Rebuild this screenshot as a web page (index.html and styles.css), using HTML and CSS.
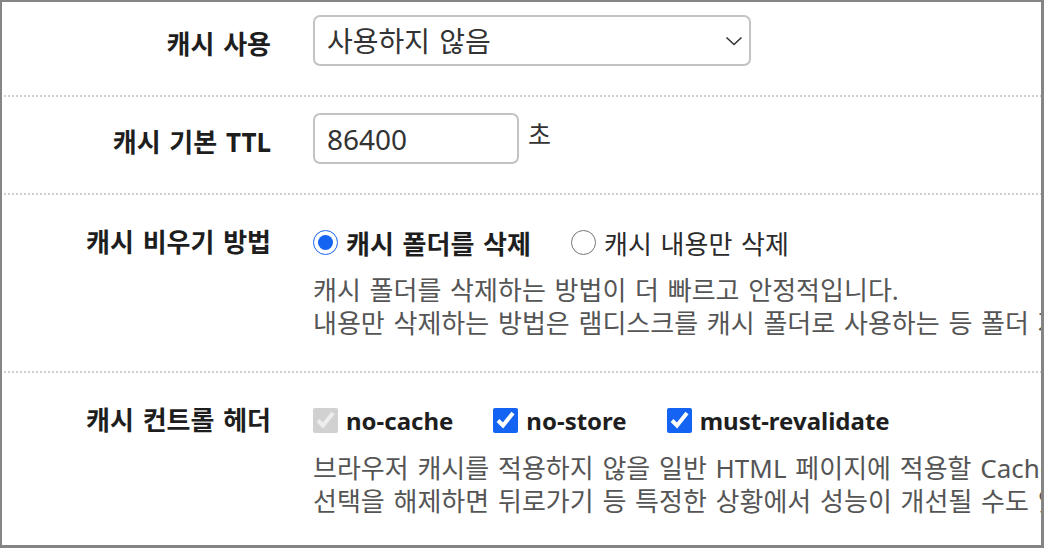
FILE: index.html
```html
<!DOCTYPE html>
<html lang="ko">
<head>
  <meta charset="UTF-8">
  <title>캐시 설정</title>
  <link rel="stylesheet" href="styles.css">
</head>
<body>
<div class="frame">

  <div class="row">
    <div class="label">캐시 사용</div>
    <div class="field">
      <div class="select-wrap">
        <select class="select">
          <option>사용하지 않음</option>
          <option>사용</option>
        </select>
        <svg class="chevron" width="18" height="10" viewBox="0 0 18 10">
          <path d="M1.5 1.5l7.5 7 7.5-7" fill="none" stroke="#333" stroke-width="1.6"/>
        </svg>
      </div>
    </div>
  </div>

  <div class="row">
    <div class="label">캐시 기본 TTL</div>
    <div class="field inline">
      <input type="text" class="text-input" value="86400">
      <span class="unit">초</span>
    </div>
  </div>

  <div class="row tall">
    <div class="label">캐시 비우기 방법</div>
    <div class="field">
      <div class="options">
        <label class="option">
          <input type="radio" name="clear_method" checked>
          <span>캐시 폴더를 삭제</span>
        </label>
        <label class="option">
          <input type="radio" name="clear_method">
          <span>캐시 내용만 삭제</span>
        </label>
      </div>
      <p class="desc">캐시 폴더를 삭제하는 방법이 더 빠르고 안정적입니다.</p>
      <p class="desc">내용만 삭제하는 방법은 램디스크를 캐시 폴더로 사용하는 등 폴더 자체를 삭제할 수 없는 경우에 사용하십시오.</p>
    </div>
  </div>

  <div class="row tall">
    <div class="label">캐시 컨트롤 헤더</div>
    <div class="field">
      <div class="options">
        <label class="option latin">
          <input type="checkbox" checked disabled>
          <span>no-cache</span>
        </label>
        <label class="option latin">
          <input type="checkbox" checked>
          <span>no-store</span>
        </label>
        <label class="option latin">
          <input type="checkbox" checked>
          <span>must-revalidate</span>
        </label>
      </div>
      <p class="desc">브라우저 캐시를 적용하지 않을 일반 HTML 페이지에 적용할 Cache-Control 헤더를 선택할 수 있습니다.</p>
      <p class="desc">선택을 해제하면 뒤로가기 등 특정한 상황에서 성능이 개선될 수도 있지만, 회원 정보 노출 등 부작용이 발생할 수 있습니다.</p>
    </div>
  </div>

</div>
</body>
</html>
```

FILE: styles.css
```css
body {
  margin: 0;
  font-family: "Noto Sans", "Noto Sans CJK KR", sans-serif;
  background-color: white;
}

.frame {
  width: 1044px;
  height: 548px;
  box-sizing: border-box;
  border: solid #858585;
  border-width: 2px 3px 3px 2px;
  overflow: hidden;
}

.row {
  display: grid;
  grid-template-columns: 267px minmax(0, 1fr);
  column-gap: 42px;
  margin-left: 2px;
  padding: 16px 0 31px;
  background: repeating-linear-gradient(90deg, #cfcfcf 0 2px, transparent 2px 4px) left bottom / 100% 2px no-repeat;
}

.row:first-child {
  padding-top: 13px;
}

.row.tall {
  padding-bottom: 33px;
}

.label {
  text-align: right;
  font-size: 26px;
  font-weight: bold;
  word-spacing: 2px;
  color: #1e1e1e;
  line-height: 43px;
  padding-top: 8px;
}

.tall .label {
  line-height: 63px;
  padding-top: 0;
}

.field {
  min-width: 0;
}

.inline {
  display: flex;
  align-items: center;
  gap: 9px;
}

.select-wrap {
  position: relative;
  width: 438px;
}

.select {
  appearance: none;
  width: 100%;
  height: 51px;
  box-sizing: border-box;
  border: 2px solid #c3c3c3;
  border-radius: 7px;
  background: white;
  padding: 0 40px 0 12px;
  font-family: inherit;
  font-size: 28px;
  word-spacing: 2px;
  color: #333;
}

.chevron {
  position: absolute;
  right: 8px;
  top: 21px;
  pointer-events: none;
}

.text-input {
  width: 206px;
  height: 51px;
  box-sizing: border-box;
  border: 2px solid #c3c3c3;
  border-radius: 7px;
  padding: 0 12px;
  font-family: inherit;
  font-size: 28px;
  color: #333;
}

.unit {
  font-size: 25px;
  color: #333;
  margin-bottom: 12px;
}

.options {
  display: flex;
  align-items: center;
  gap: 40px;
  height: 63px;
}

.option {
  display: flex;
  align-items: center;
  gap: 8px;
  font-size: 26px;
  word-spacing: 2px;
  color: #2a2a2a;
  cursor: pointer;
}

.option.latin {
  font-size: 24px;
}

.option input {
  width: 25px;
  height: 25px;
  margin: 0;
  accent-color: #1463f3;
}

.option input:checked + span {
  font-weight: bold;
  color: #1e1e1e;
}

.desc {
  margin: 0;
  font-size: 26px;
  word-spacing: 2px;
  line-height: 33px;
  color: #555;
  white-space: nowrap;
}
```
